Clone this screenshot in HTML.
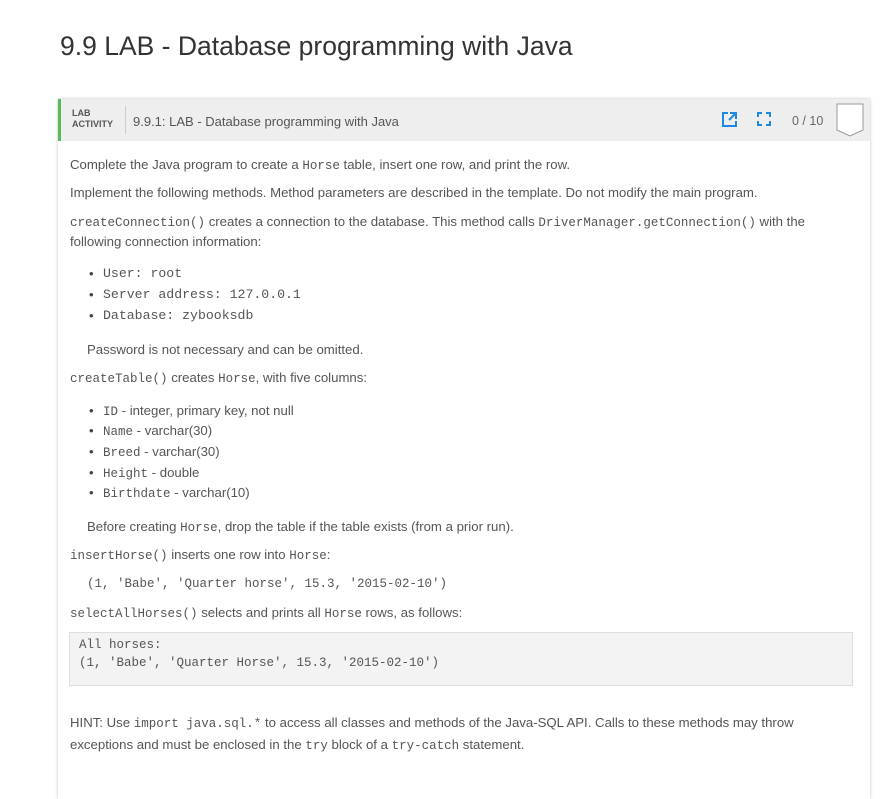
<!DOCTYPE html>
<html><head><style>
body{margin:0;background:#fff;font-family:"Liberation Sans",sans-serif;color:#555;}
h1{position:absolute;left:60px;top:31px;margin:0;font-size:26.5px;font-weight:normal;color:#333;}
.card{position:absolute;left:58px;top:99px;width:812px;height:700px;box-shadow:0 0 3px rgba(0,0,0,.25);}
.hdr{position:absolute;left:0;top:0;width:812px;height:42px;background:#eeeeee;border-left:3px solid #5cb85c;box-sizing:border-box;}
.t{position:absolute;font-size:13.2px;white-space:nowrap;color:#555;}
code,.m{font-family:"Liberation Mono",monospace;font-size:12.5px;color:#555;}
.li{position:absolute;left:44px;font-size:13.2px;white-space:nowrap;}
.li:before{content:"•";position:absolute;left:-14px;color:#444;font-family:"Liberation Sans",sans-serif;}
</style></head><body>
<h1>9.9 LAB - Database programming with Java</h1>
<div class="card">
<div class="hdr">
 <div style="position:absolute;left:11px;top:9px;font-size:9px;line-height:11px;color:#555;font-weight:bold;">LAB<br>ACTIVITY</div>
 <div style="position:absolute;left:64px;top:7px;width:1px;height:28px;background:#ccc"></div>
 <div style="position:absolute;left:72px;top:15px;font-size:13px;color:#555">9.9.1: LAB - Database programming with Java</div>
 <svg style="position:absolute;left:661px;top:13px" width="15" height="15" viewBox="0 0 15 15"><path d="M6 1H1v13h13V9" fill="none" stroke="#1e88e5" stroke-width="2"/><path d="M8 1h6v6M14 1L7 8" fill="none" stroke="#1e88e5" stroke-width="2"/></svg>
 <svg style="position:absolute;left:696px;top:13px" width="14" height="14" viewBox="0 0 14 14"><path d="M1 5V1h4M9 1h4v4M13 9v4H9M5 13H1V9" fill="none" stroke="#1e88e5" stroke-width="2"/></svg>
 <div style="position:absolute;left:731px;top:15px;font-size:12.5px;color:#666">0 / 10</div>
 <svg style="position:absolute;left:775px;top:4px" width="28" height="34" viewBox="0 0 28 34"><path d="M1 1h26v26l-13 6L1 27z" fill="#fff" stroke="#999"/></svg>
</div>
</div>
<div class="t" style="left:70px;top:157px">Complete the Java program to create a <span class="m">Horse</span> table, insert one row, and print the row.</div>
<div class="t" style="left:70px;top:185px">Implement the following methods. Method parameters are described in the template. Do not modify the main program.</div>
<div class="t" style="left:70px;top:214px"><span class="m">createConnection()</span> creates a connection to the database. This method calls <span class="m">DriverManager.getConnection()</span> with the</div>
<div class="t" style="left:70px;top:234px">following connection information:</div>
<div class="li m" style="left:103px;top:266px">User: root</div>
<div class="li m" style="left:103px;top:287px">Server address: 127.0.0.1</div>
<div class="li m" style="left:103px;top:308px">Database: zybooksdb</div>
<div class="t" style="left:87px;top:342px">Password is not necessary and can be omitted.</div>
<div class="t" style="left:70px;top:370px"><span class="m">createTable()</span> creates <span class="m">Horse</span>, with five columns:</div>
<div class="li t" style="left:103px;top:403px"><span class="m">ID</span> - integer, primary key, not null</div>
<div class="li t" style="left:103px;top:423px"><span class="m">Name</span> - varchar(30)</div>
<div class="li t" style="left:103px;top:444px"><span class="m">Breed</span> - varchar(30)</div>
<div class="li t" style="left:103px;top:465px"><span class="m">Height</span> - double</div>
<div class="li t" style="left:103px;top:485px"><span class="m">Birthdate</span> - varchar(10)</div>
<div class="t" style="left:87px;top:519px">Before creating <span class="m">Horse</span>, drop the table if the table exists (from a prior run).</div>
<div class="t" style="left:70px;top:547px"><span class="m">insertHorse()</span> inserts one row into <span class="m">Horse</span>:</div>
<div class="t m" style="left:87px;top:577px">(1, 'Babe', 'Quarter horse', 15.3, '2015-02-10')</div>
<div class="t" style="left:70px;top:605px"><span class="m">selectAllHorses()</span> selects and prints all <span class="m">Horse</span> rows, as follows:</div>
<div style="position:absolute;left:69px;top:632px;width:784px;height:54px;background:#f3f3f3;border:1px solid #ddd;box-sizing:border-box"></div>
<div class="t m" style="left:79px;top:638px">All horses:</div>
<div class="t m" style="left:79px;top:656px">(1, 'Babe', 'Quarter Horse', 15.3, '2015-02-10')</div>
<div class="t" style="left:70px;top:715px">HINT: Use <span class="m">import java.sql.*</span> to access all classes and methods of the Java-SQL API. Calls to these methods may throw</div>
<div class="t" style="left:70px;top:737px">exceptions and must be enclosed in the <span class="m">try</span> block of a <span class="m">try-catch</span> statement.</div>
</body></html>
